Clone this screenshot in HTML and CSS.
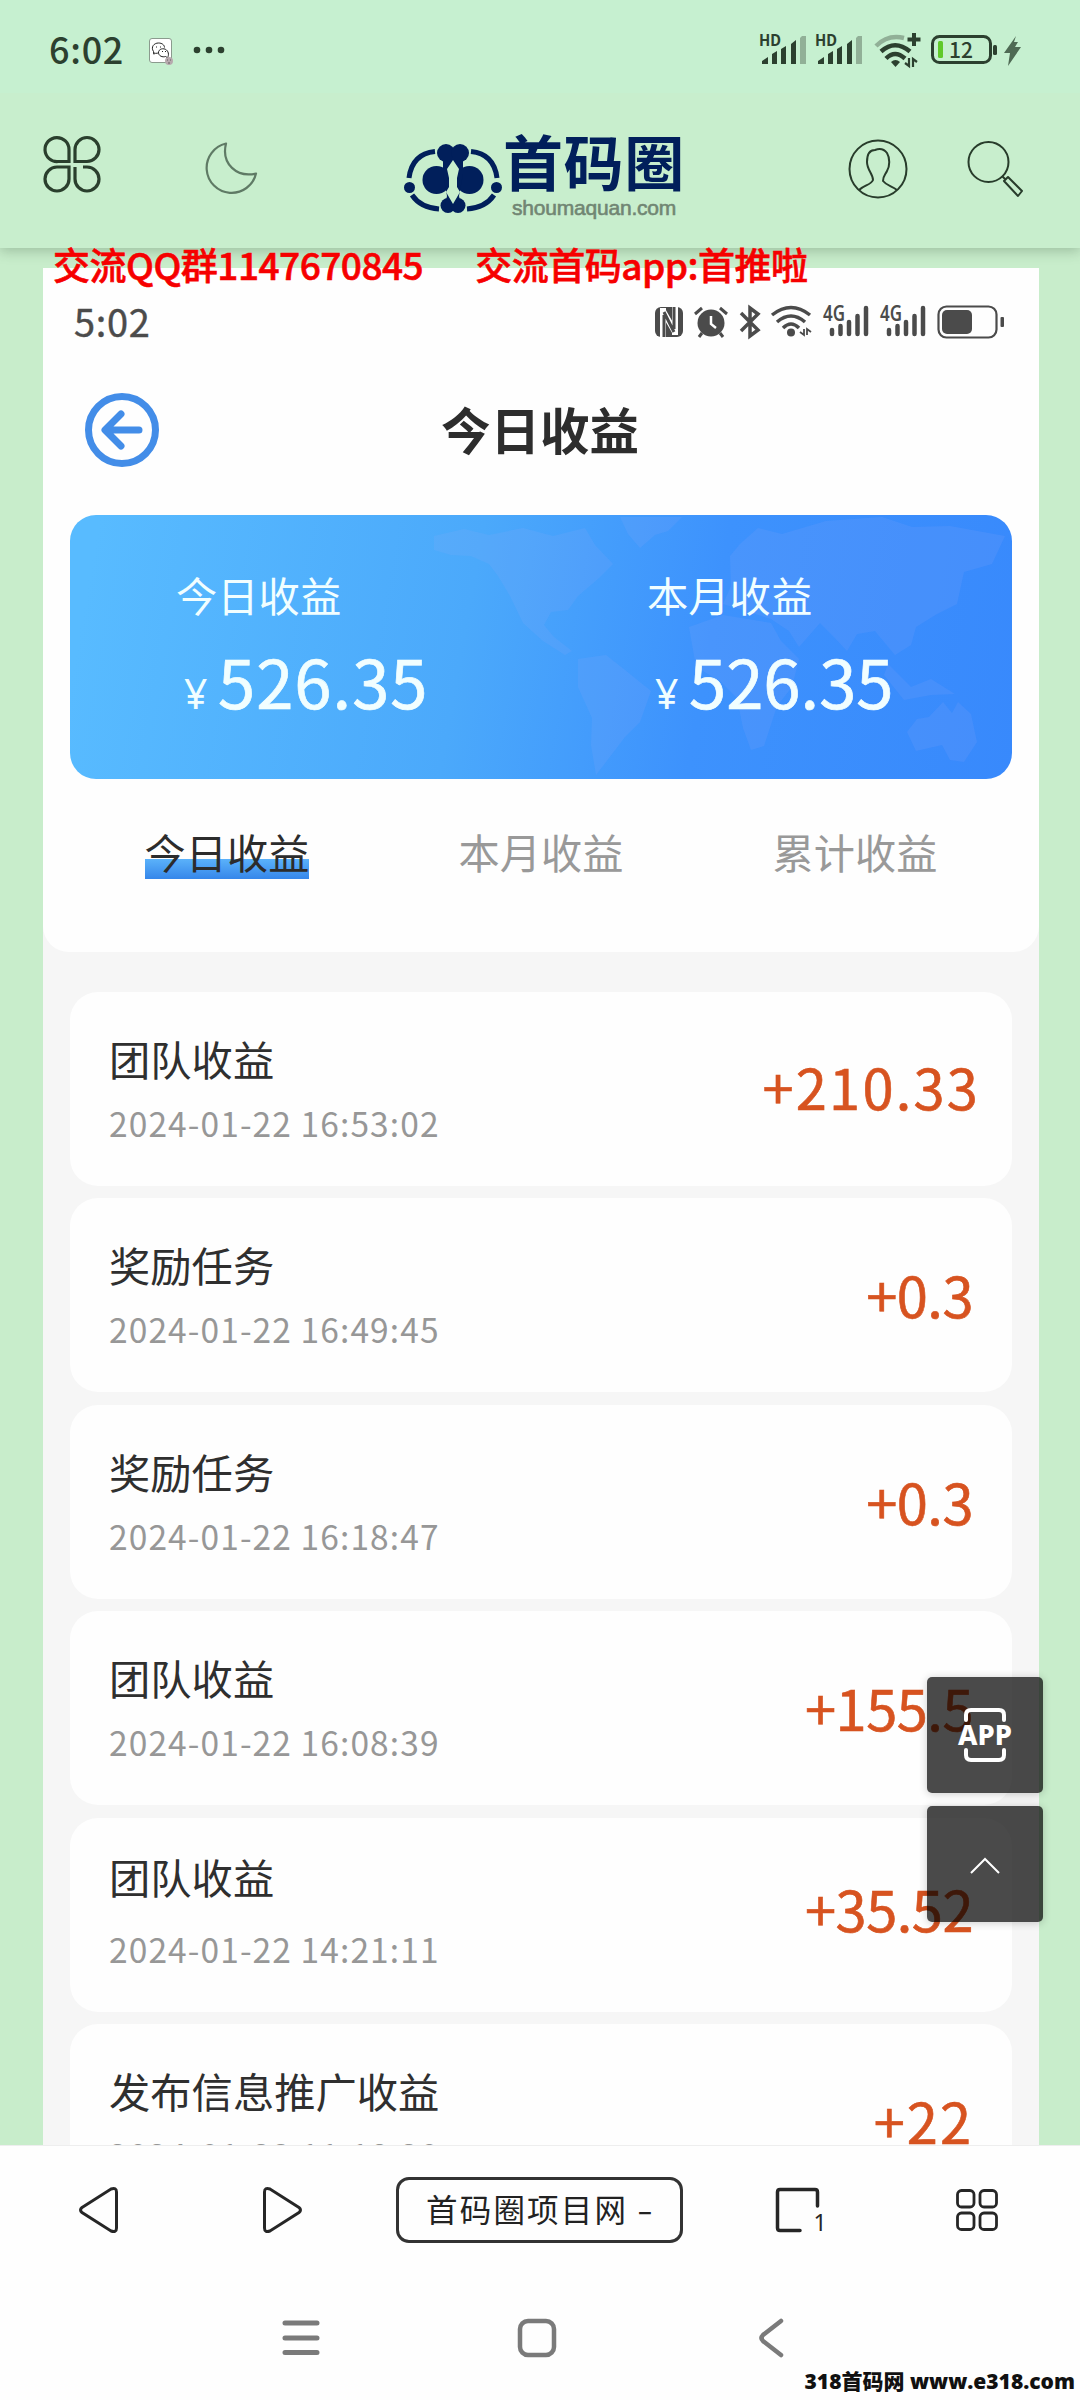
FILE: index.html
```html
<!DOCTYPE html>
<html lang="zh-CN">
<head>
<meta charset="utf-8">
<title>首码圈项目网</title>
<link rel="stylesheet" href="styles.css">
</head>
<body>
<div class="status">
  <span class="status-time">6:02</span>
  <svg class="chat" width="25" height="27" viewBox="0 0 25 27"><rect x=".5" y=".5" width="22" height="24" rx="2.5" fill="#fff" stroke="#8b9b8e"/><path d="M5 16.500l-.5-3C1.500 9 5 5 9.500 5c3.500 0 6 2 6 4.500M4 15c1 0 4 1 6-.5M18 20c2-1.500 2-6-.5-8-3-2.500-8-1-8 2.500s4 5 7 4l2.500 1.500" fill="none" stroke="#222" stroke-width="1"/><path d="M7 9h1M11 9h1M13 13.500h1M16 13.500h1" stroke="#222"/><circle cx="20" cy="23" r="4" fill="#b7aaae"/><path d="M18 22h1M21 22h1M19 25h2" stroke="#665c60"/></svg>
  <svg class="more" width="32" height="8" viewBox="0 0 32 8" fill="#2c402f"><circle cx="4" cy="4" r="3.300"/><circle cx="16" cy="4" r="3.300"/><circle cx="28" cy="4" r="3.300"/></svg>
  <div class="status-icons">
    <svg width="48" height="34" viewBox="0 0 48 34" fill="#2c402f"><text class="tag" x="-1" y="14" textLength="22" lengthAdjust="spacingAndGlyphs">HD</text><path d="M2 32v-3l6-4v7zM12 32V22l5-3v13zM21 32V17l5-3v18zM31 32V12l5-4v24z"/><path d="M40 32V6l2-2h4v28z" fill="#91b097"/></svg>
    <svg width="48" height="34" viewBox="0 0 48 34" fill="#2c402f"><text class="tag" x="-1" y="14" textLength="22" lengthAdjust="spacingAndGlyphs">HD</text><path d="M2 32v-3l6-4v7zM12 32V22l5-3v13zM21 32V17l5-3v18zM31 32V12l5-4v24z"/><path d="M40 32V6l2-2h4v28z" fill="#91b097"/></svg>
    <svg class="wifi" width="48" height="36" viewBox="0 0 48 36" fill="none" stroke="#2c402f" stroke-width="4.500"><path d="M2 13Q14 1 30 5" stroke="#91b097"/><path d="M7 18.500Q21 6 36 18.500M12 25.500Q21 16.500 31 25.500"/><path d="M17 29q4.500-4 9 0l-4.500 5z" fill="#2c402f" stroke="none"/><path d="M40 0v13M33.500 6.500h13" stroke-width="4"/><path d="M35 25v8l-4-3M39 34v-8l4 3" stroke-width="2.200"/></svg>
    <svg class="batt" width="67" height="30" viewBox="0 0 67 30"><rect x="1.500" y="1.500" width="58" height="26" rx="7" fill="none" stroke="#2c402f" stroke-width="3"/><rect x="7" y="6" width="5" height="17" rx="1.500" fill="#5fc92a"/><rect x="62" y="10" width="4" height="10" rx="1.500" fill="#2c402f"/><text class="pct" x="18" y="22.500" textLength="24" lengthAdjust="spacingAndGlyphs">12</text></svg>
    <svg width="17" height="30" viewBox="0 0 17 30"><path d="M12 0L0 17h6L4 30 17 11h-6l3-5h-4z" fill="#4f6a54"/></svg>
  </div>
</div>

<header class="header">
  <svg class="clover" width="56" height="58" viewBox="0 0 56 58" fill="none" stroke="#2a3f2d" stroke-width="3.200"><path d="M25 26.500H14A12 12 0 1 1 25 14.500zM31 26.500V14.500A12 12 0 1 1 43 26.500zM25 32v12A12 12 0 1 1 13 32zM31 32v12A12 12 0 1 0 43 32h-4"/></svg>
  <svg class="moon" width="52" height="54" viewBox="0 0 52 54"><path d="M20 1.500A25 25 0 1 0 50 31.500C31 36 15 22 20 1.500z" fill="none" stroke="#5f7a65" stroke-width="2.200" stroke-linejoin="round"/></svg>
  <div class="logo">
    <svg width="98" height="70" viewBox="0 0 98 70" fill="#011f5b"><g fill="none" stroke="#011f5b" stroke-width="5"><path d="M5 35C7 19 16 10 31 8.500M67 8.500C82 10 91 19 93 35M8 52C14 61 22 65 35 66M63 66C76 65 84 61 90 52"/></g><circle cx="5.500" cy="44.500" r="5.500"/><circle cx="92.500" cy="44.500" r="5.500"/><circle cx="42" cy="10" r="9"/><circle cx="56" cy="10" r="9"/><circle cx="32.500" cy="37" r="14"/><circle cx="65.500" cy="37" r="14"/><circle cx="44" cy="62.500" r="7.500"/><circle cx="54" cy="62.500" r="7.500"/><path d="M39 15h20v16l-4 22 2 9H41l2-9-4-22z"/><path d="M49 17l6 9-2 9v9l3 5-7 12-7-12 3-5v-9l-2-9z" fill="#c8eecd"/></svg>
    <div class="logo-text"><b>首码圈</b><span>shoumaquan.com</span></div>
  </div>
  <svg class="user" width="60" height="60" viewBox="0 0 60 60" fill="none" stroke="#283c2b" stroke-width="2"><circle cx="30" cy="30" r="28.500"/><path d="M11 51c5-5 12-5 14-10 0-6-6-10-6-18 0-8 3-12 8-12 5-2 9-1 12 3 3 5 3 13 0 18-2 4-4 5-4 10 4 5 9 5 14 9"/></svg>
  <svg class="search" width="57" height="58" viewBox="0 0 57 58" fill="none" stroke="#283c2b" stroke-width="2"><circle cx="21.500" cy="22" r="20"/><path d="M35 36l4 4M37 41l4-4 14 14-4 5z" stroke-linejoin="round"/></svg>
</header>

<main class="page">
  <p class="notice"><span>交流QQ群1147670845</span><span>交流首码app:首推啦</span></p>
  <section class="shot">
    <div class="top">
      <div class="inner-status">
        <span>5:02</span>
        <svg class="i-nfc" width="30" height="32" viewBox="0 0 30 32"><rect x="1" y="1" width="28" height="30" rx="6" fill="#4b4b4b"/><path d="M9 2v25l0 4M9 5l12 21M21 29V1" fill="none" stroke="#fff" stroke-width="6"/><path d="M10 9v22M10 6l10 20M20 23V1" fill="none" stroke="#4b4b4b" stroke-width="3"/></svg>
        <svg class="i-alarm" width="34" height="32" viewBox="0 0 34 32"><circle cx="17" cy="17" r="13.500" fill="#4b4b4b"/><path d="M1 8l7-6M26 2l7 6M8 27l-3 4M26 27l3 4" stroke="#4b4b4b" stroke-width="3"/><path d="M17 10v8l5 4" fill="none" stroke="#fff" stroke-width="2.500"/></svg>
        <svg class="i-bt" width="22" height="32" viewBox="0 0 22 32" fill="none" stroke="#4b4b4b" stroke-width="3.500"><path d="M2 7l17 17-8 6V2l8 6L2 25"/></svg>
        <svg class="i-wifi" width="40" height="32" viewBox="0 0 40 32" fill="none" stroke="#4b4b4b" stroke-width="3.500"><path d="M1 10Q20-5 39 10M6 17Q20 5 34 17M12 23Q20 15 28 23"/><circle cx="20" cy="27.500" r="4" fill="#4b4b4b" stroke="none"/><path d="M33 24v6l-4-3M36 30v-6l4 3" stroke-width="1.800"/></svg>
        <svg class="i-sig" width="46" height="32" viewBox="0 0 46 32" stroke="#4b4b4b" stroke-width="4.500" stroke-linecap="round"><text class="g4" x="0" y="16" textLength="22" lengthAdjust="spacingAndGlyphs" stroke="none">4G</text><path d="M9 25v4M17.500 21v8M26 17v12M34.500 11v18M43 3v26"/></svg>
        <svg class="i-sig" width="46" height="32" viewBox="0 0 46 32" stroke="#4b4b4b" stroke-width="4.500" stroke-linecap="round"><text class="g4" x="0" y="16" textLength="22" lengthAdjust="spacingAndGlyphs" stroke="none">4G</text><path d="M9 25v4M17.500 21v8M26 17v12M34.500 11v18M43 3v26"/></svg>
        <svg width="68" height="34" viewBox="0 0 68 34"><rect x="1.500" y="1.500" width="58" height="31" rx="8" fill="none" stroke="#4b4b4b" stroke-width="2.200"/><rect x="5" y="5" width="30" height="24" rx="5" fill="#4b4b4b"/><rect x="63.500" y="12" width="3.500" height="10" rx="1" fill="#4b4b4b"/></svg>
      </div>
      <div class="titlebar">
        <svg width="76" height="76" viewBox="0 0 76 76" fill="none" stroke="#438de8" stroke-width="7"><circle cx="38" cy="38" r="33.500"/><path d="M55 38H22M37 22L21 38l16 16" stroke-linecap="round" stroke-linejoin="round"/></svg>
        <h1>今日收益</h1>
      </div>
      <div class="summary">
        <svg class="map" width="942" height="264" viewBox="0 0 942 264" fill="#a3a9f5" fill-opacity=".12"><path d="M364 21l30-7 25 6 34-7 30 8 32-8 10 17 18 19-14 14-21 18-10 14-17 2-7 13 10 12 18 14-7 4-22-14-20-18-13-27-12-20-9-12-18-8-20-1-17-5zM550 2h62l-14 14-13 4-15 13-12-14zM508 144l28-4 19 15 26 21-11 31-15 15-19 25-10 13-5-30 1-27-14-31zM619 112l34-12 48 8 10 18 18 18-7 28-15 19-13 40-13 4-8-22-6-30-17-17-24-14zM660 41l10-12 18-16 24 6 44-13 56-4 30 10 38-1 55 10-13 28-28 8-7 32-20 10-21 13-5 18-16 10-20-24-18 3-10 17-13-14-14-14-21 24-10-16-18-12-48-15 8-18zM837 217l10-13 12-2 14-15 9 11 6-11 13 12 6 28-13 20-14-2-8-15-26 6zM818 149l23 23 20-8 24 15-24 1-27 5-20-25z"/></svg>
        <div class="sum"><p>今日收益</p><div class="money"><small>¥</small><strong>526.35</strong></div></div>
        <div class="sum"><p>本月收益</p><div class="money month"><small>¥</small><strong>526.35</strong></div></div>
      </div>
      <nav class="tabs"><span class="on">今日收益</span><span>本月收益</span><span>累计收益</span></nav>
    </div>
    <ul class="list">
      <li><div><h2>团队收益</h2><time>2024-01-22 16:53:02</time></div><em class="wide">+210.33</em></li>
      <li><div><h2>奖励任务</h2><time>2024-01-22 16:49:45</time></div><em>+0.3</em></li>
      <li><div><h2>奖励任务</h2><time>2024-01-22 16:18:47</time></div><em>+0.3</em></li>
      <li><div><h2>团队收益</h2><time>2024-01-22 16:08:39</time></div><em>+155.5</em></li>
      <li class="spread"><div><h2>团队收益</h2><time>2024-01-22 14:21:11</time></div><em>+35.52</em></li>
      <li><div><h2>发布信息推广收益</h2><time>2024-01-22 11:18:20</time></div><em class="two">+22</em></li>
    </ul>
  </section>
</main>

<div class="floats">
  <div class="float"><svg width="56" height="54" viewBox="0 0 56 54" fill="none" stroke="#fff" stroke-width="4" stroke-linecap="round"><path d="M9 12V7q0-5 5-5h28q5 0 5 5v5M9 42v5q0 5 5 5h28q5 0 5-5v-5"/><text class="app" x="1" y="37" textLength="54" lengthAdjust="spacingAndGlyphs" stroke="none">APP</text></svg></div>
  <div class="float up"><svg width="32" height="18" viewBox="0 0 32 18" fill="none" stroke="#fff" stroke-width="2"><path d="M2 16L16 2l14 14"/></svg></div>
</div>

<footer class="toolbar">
  <svg class="prev" width="40" height="48" viewBox="0 0 40 48"><path d="M3 21.500L32 3q5.500-2 5.500 3v36q0 5-5.500 3L3 26.500q-3-2.500 0-5z" fill="none" stroke="#262626" stroke-width="3"/></svg>
  <svg class="next" width="40" height="48" viewBox="0 0 40 48"><path d="M37 21.500L8 3Q2.500 1 2.500 6v36q0 5 5.500 3l29-18.500q3-2.500 0-5z" fill="none" stroke="#262626" stroke-width="3"/></svg>
  <div class="address">首码圈项目网 <i>-</i></div>
  <svg class="tabcount" width="50" height="46" viewBox="0 0 50 46"><path d="M42.500 19V5q0-2.500-2.500-2.500H5Q2.500 2.500 2.500 5v36q0 2.500 2.500 2.500h20" fill="none" stroke="#262626" stroke-width="3.500" stroke-linecap="round"/><text class="count" x="38.500" y="43.500">1</text></svg>
  <svg class="grid" width="42" height="42" viewBox="0 0 42 42" fill="none" stroke="#262626" stroke-width="2.800"><rect x="1.500" y="1.500" width="16.500" height="16.500" rx="4"/><rect x="24" y="1.500" width="16.500" height="16.500" rx="4"/><rect x="1.500" y="24" width="16.500" height="16.500" rx="4"/><rect x="24" y="24" width="16.500" height="16.500" rx="4"/></svg>
</footer>
<div class="sysnav">
  <svg width="38" height="40" viewBox="0 0 38 40" stroke="#7a7a7a" stroke-width="5" stroke-linecap="round"><path d="M3 5h32M3 20h32M3 34.500h32"/></svg>
  <svg class="home" width="40" height="40" viewBox="0 0 40 40"><rect x="3" y="3" width="34" height="34" rx="8" fill="none" stroke="#7a7a7a" stroke-width="4.500"/></svg>
  <svg class="back" width="26" height="40" viewBox="0 0 26 40"><path d="M22 3L4 17q-3 3 0 6l18 14" fill="none" stroke="#7a7a7a" stroke-width="4.500" stroke-linecap="round"/></svg>
</div>
<div class="mark">318首码网 www.e318.com</div>
</body>
</html>
```
FILE: styles.css
```css
* { box-sizing: border-box; margin: 0; padding: 0; }
body {
  position: relative;
  display: flex;
  flex-direction: column;
  width: 1080px;
  height: 2400px;
  overflow: hidden;
  background: #c8edcb;
  font-family: "Noto Sans", "Noto Sans CJK SC", sans-serif;
  color: #333;
}
svg { display: block; flex: none; overflow: visible; }

.status { position: relative; z-index: 1; display: flex; height: 93px; padding: 0 59px 0 49px; background: #c6f0d0; }
.status-time { width: 100px; margin-top: 24px; font: 500 36px/48px "Noto Sans CJK SC", sans-serif; color: #2c402f; letter-spacing: .7px; }
.chat { margin-top: 38px; }
.more { margin: 46px 0 0 19px; }
.status-icons { display: flex; margin: 32px 0 0 auto; }
.status-icons svg:nth-child(2) { margin-left: 8px; }
.status-icons .wifi { margin: 1px 0 0 10px; }
.status-icons .batt { margin: 3px 6px 0 9px; }
.status-icons svg:last-child { margin-top: 4px; }
.tag { font: 700 15.500px "Noto Sans", sans-serif; }
.pct { font: 500 22px "Noto Sans CJK SC", sans-serif; fill: #2c402f; }

.header {
  position: relative;
  display: flex;
  flex: none;
  height: 163px;
  margin-bottom: 0;
  height: 155px;
  padding: 0 56px 0 44px;
  background: #c8eecd;
  box-shadow: 0 3px 12px rgba(40, 70, 45, .28);
}
.clover { margin-top: 42px; }
.moon { margin: 49px 0 0 106px; }
.logo { display: flex; margin: 42px 0 0 146px; width: 280px; }
.logo > svg { margin-top: 8px; }
.logo-text { display: flex; flex-direction: column; margin-left: 1px; }
.logo-text b { font: 700 60px/64px "Noto Sans CJK SC", sans-serif; color: #011f5b; height: 68px; margin-top: -7px; letter-spacing: .6px; white-space: nowrap; }
.logo-text span { margin-left: 9px; font: 400 21px/24px "Liberation Sans", sans-serif; color: #718673; letter-spacing: -.2px; -webkit-text-stroke: .6px #718673; }
.user { margin: 46px 0 0 164px; }
.search { margin: 47px 0 0 auto; }

.page { position: relative; flex: none; height: 1897px; padding: 20px 41px 0 43px; }
.notice {
  position: absolute;
  left: 53px;
  top: -11px;
  z-index: 3;
  display: flex;
  gap: 52px;
  font: 500 37px/54px "Noto Sans CJK SC", sans-serif;
  letter-spacing: -.5px;
  -webkit-text-stroke: .6px #f60000;
  color: #f60000;
  white-space: nowrap;
}
.shot { height: 1877px; background: #f6f6f6; overflow: hidden; }
.top { height: 684px; background: #fefefe; border-radius: 0 0 26px 26px; }
.inner-status { display: flex; height: 124px; padding: 37px 34px 0 31px; color: #4b4b4b; }
.inner-status > span { font: 400 38px/32px "Noto Sans CJK SC", sans-serif; letter-spacing: .7px; -webkit-text-stroke: .4px #4b4b4b; }
.i-nfc { margin: 1px 10px 0 auto; }
.i-alarm { margin: 1px 11px 0 0; }
.i-bt { margin: 1px 10px 0 0; }
.i-wifi { margin: 0 12px 0 0; }
.i-sig { margin: 0 11px 0 0; }
.g4 { font: 600 22px "Noto Sans", sans-serif; fill: #4b4b4b; }

.titlebar { display: flex; height: 122px; padding: 0 41px; }
.titlebar h1 { margin: 2px 0 0 281px; font: 700 49.500px/70px "Noto Sans CJK SC", sans-serif; color: #2d2d2d; white-space: nowrap; }

.summary {
  position: relative;
  display: grid;
  grid-template-columns: 1fr 1fr;
  height: 264px;
  margin: 1px 27px 0;
  overflow: hidden;
  border-radius: 26px;
  background: linear-gradient(100deg, #58bbff 3%, #4ba9fb 42%, #3d92fd 67%, #3889fc 100%);
  color: #f1feff;
}
.map { position: absolute; left: 0; top: 0; }
.sum { position: relative; padding: 58px 0 0 106px; }
.sum p { font: 400 41.300px/42px "Noto Sans CJK SC", sans-serif; }
.money { display: flex; align-items: baseline; margin-top: 20px; padding-left: 8px; line-height: 90px; }
.money small { width: 34px; font-size: 41px; line-height: 50px; font-weight: 400; }
.money strong { font: 400 67px/90px "Noto Sans CJK SC", sans-serif; letter-spacing: 1px; -webkit-text-stroke: .7px #f1feff; }
.month strong { letter-spacing: 0; }

.tabs { display: grid; grid-template-columns: repeat(3, 314px); justify-content: center; justify-items: center; margin-top: 46px; }
.tabs span { font: 400 41.200px/52px "Noto Sans CJK SC", sans-serif; color: #999; }
.tabs .on { color: #2c2c2c; background: linear-gradient(#5bb2fa, #3586ea) 0 100%/100% 20px no-repeat; height: 54px; }

.list { display: flex; flex-direction: column; gap: 12.400px; list-style: none; padding: 40px 27px 0; }
.list li { display: flex; justify-content: space-between; flex: none; height: 194px; padding: 0 39px; border-radius: 28px; background: #fefefe; }
.list h2 { margin-top: 38px; font: 400 41.300px/56px "Noto Sans CJK SC", sans-serif; color: #2f2f2f; }
.list time { display: block; margin-top: 12px; font: 400 33.500px/50px "Noto Sans CJK SC", sans-serif; color: #979797; letter-spacing: 1.100px; }
.list .spread h2 { margin-top: 30px; }
.list .spread time { margin-top: 20px; }
.list em { margin-top: 56px; font: 400 56px/80px "Noto Sans CJK SC", sans-serif; color: #d75320; letter-spacing: -.5px; -webkit-text-stroke: .6px #d75320; }
.list .wide { margin: 54px -7px 0 0; letter-spacing: 2.200px; }
.list .spread em { margin-top: 50px; }
.list .two { letter-spacing: 2px; }

.floats { position: absolute; left: 927px; top: 1677px; z-index: 4; display: flex; flex-direction: column; gap: 13px; }
.float { display: flex; align-items: center; justify-content: center; width: 116px; height: 116px; border-radius: 5px; background: rgba(0, 0, 0, .71); box-shadow: 0 1px 8px rgba(0, 0, 0, .2); }
.up svg { margin-top: 3px; }
.app { font: 800 28px "Noto Sans", sans-serif; fill: #fff; }

.toolbar { position: relative; z-index: 2; display: flex; flex: none; align-items: center; height: 130px; padding: 0 82px 2px 79px; border-top: 1px solid #eee; background: #fefefe; }
.next { margin-left: 143px; }
.address { flex: none; width: 287px; height: 66px; margin-left: 94px; border: 3px solid #333; border-radius: 13px; padding-left: 27px; font: 400 31.500px/57px "Noto Sans CJK SC", sans-serif; letter-spacing: 2.200px; color: #222; white-space: pre; }
.address i { display: inline-block; font-style: normal; transform: scaleX(1.450); transform-origin: 0 50%; }
.tabcount { margin-left: 92px; }
.count { font: 400 23px "Noto Sans", sans-serif; fill: #262626; }
.grid { margin-left: auto; }
.sysnav { display: flex; flex: 1; padding: 43px 0 0 282px; background: #fefefe; }
.home { margin-left: 197px; }
.back { margin-left: 202px; }
.mark { position: absolute; right: 5px; bottom: 5px; z-index: 5; font: 800 21px/28px "Open Sans", "Noto Sans CJK SC", sans-serif; color: #111; white-space: nowrap; }
```
